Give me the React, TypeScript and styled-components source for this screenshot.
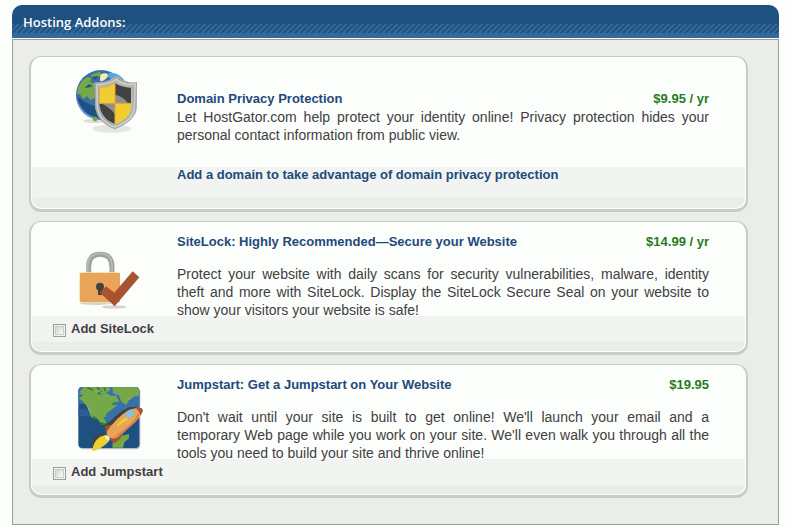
import React from "react";
import styled, { createGlobalStyle } from "styled-components";

const GlobalStyle = createGlobalStyle`
  body {
    margin: 0;
    background: #fcfefb;
    color: #414042;
    font: 14px/18px "Liberation Sans", Arial, sans-serif;
  }
`;

const Panel = styled.section`
  margin: 5px 12px 0;
`;

const PanelHeader = styled.header`
  box-sizing: border-box;
  height: 33px;
  padding: 8px 11px 0;
  border-bottom: 5px solid #36699b;
  border-radius: 10px 10px 0 0;
  background:
    repeating-linear-gradient(135deg, #36699b 0 1px, #1f5180 2px 3px, #36699b 4px) 0 100% / 100% 9px no-repeat,
    #1f5180;
`;

const PanelTitle = styled.h2`
  margin: 0;
  color: #fcfefb;
  font: 600 13px/18px "Open Sans", "Trebuchet MS", sans-serif;
`;

const PanelBody = styled.div`
  display: flex;
  flex-direction: column;
  gap: 9px;
  margin-top: 1px;
  padding: 16px 30px 26px 16px;
  border: 1px solid #9c9e9b;
  background: #ebedea;
`;

const Card = styled.article`
  border: solid #c9cbc8;
  border-width: 1px 2px 3px;
  border-radius: 12px;
  background: #fcfefb;
  overflow: hidden;
`;

const CardMain = styled.div`
  display: grid;
  grid-template-columns: 146px 1fr;
  padding-right: 37px;
`;

const Media = styled.div<{ $top: number }>`
  padding: ${(p) => p.$top}px 0 0 29px;

  svg {
    display: block;
  }
`;

const Details = styled.div<{ $simple?: boolean }>`
  display: flex;
  flex-direction: column;
  gap: ${(p) => (p.$simple ? 0 : 14)}px;
  padding: ${(p) => (p.$simple ? "33px 0 23px" : "11px 0 0")};
`;

const Heading = styled.div`
  display: flex;
  justify-content: space-between;
  font-weight: bold;
`;

const Name = styled.h3`
  margin: 0;
  color: #23497c;
  font-size: 13px;
`;

const Price = styled.span`
  color: #1f7d1c;
  font-size: 13px;
`;

const Description = styled.p`
  margin: 0;
  text-align: justify;
`;

const Strip = styled.div<{ $link?: boolean }>`
  display: flex;
  box-sizing: border-box;
  height: ${(p) => (p.$link ? 31 : 26)}px;
  margin: ${(p) => (p.$link ? "0 1px" : "-3px 1px 0")};
  padding-left: ${(p) => (p.$link ? 145 : 21)}px;
  background: #f2f4f1;
`;

const CardBase = styled.div<{ $tall?: boolean }>`
  height: ${(p) => (p.$tall ? 10 : 9)}px;
  margin: 0 1px 1px;
  border-radius: 0 0 10px 10px;
  background: #ebedea;
`;

const DomainLink = styled.a`
  color: #23497c;
  font-size: 13px;
  font-weight: bold;
  line-height: 16px;
  text-decoration: none;
`;

const Choice = styled.label`
  display: flex;
  gap: 5px;
  padding-top: 4px;
  font-size: 13px;
  font-weight: bold;
`;

const Checkbox = styled.input`
  appearance: none;
  box-sizing: border-box;
  width: 13px;
  height: 13px;
  margin: 4px 0 0;
  border: 1px solid #9c9e9b;
  background: linear-gradient(135deg, #c4c6c3, #f8faf7 75%);
  box-shadow: inset 0 0 0 1px #f2f4f1, inset 0 0 0 2px #c9cbc8;
`;

const PrivacyIcon = () => (
  <svg width="100" height="80" viewBox="0 0 300 240" aria-hidden="true">
    <ellipse cx="155" cy="206" rx="58" ry="12" fill="#e4e6e4" />
    <ellipse cx="102" cy="183" rx="32" ry="6" fill="#dcdedc" />
    <circle cx="123" cy="105" r="75" fill="#3970a8" />
    <path d="M49 112C58 148 88 154 118 179L105 178C73 170 53 143 49 112Z" fill="#5b9fd4" />
    <path d="M52 110C67 120 88 137 116 140V174C79 168 58 145 52 110Z" fill="#1f5180" />
    <path d="M66 62L82 51L94 53L91 67L103 70L104 114L92 121L81 108L70 118L60 103L51 102L54 83Z" fill="#75a846" />
    <path d="M92 45L118 35L126 43L112 52L95 52ZM98 170L110 170V185L99 182Z" fill="#75a846" />
    <path d="M73 83L87 72L98 79L84 83ZM96 51L111 47L114 53L103 61Z" fill="#23568a" />
    <path d="M121 45C132 35 147 40 144 48C139 58 125 67 120 62Z" fill="#eff0b5" />
    <path d="M146 40C165 34 184 47 194 63L165 61L145 52Z" fill="#59a6e1" />
    <path d="M103 68Q139 68 159 54L174 49L190 61Q210 71 231 67V145Q226 184 164 208Q113 186 106 144Z" fill="#b7b9b6" />
    <path d="M103 68Q140 70 166 54L176 50L190 61Q210 71 231 67L228 148Q222 184 164 208L163 196Q216 175 219 142V76Q187 73 169 62Q141 79 117 78L120 143Q124 179 164 195V207Q112 187 106 144Z" fill="#a4a6a3" />
    <path d="M111 74Q146 74 169 58Q192 76 225 72L223 143Q220 181 164 201Q117 182 112 141Z" fill="none" stroke="#d0d2cf" strokeWidth="5" />
    <path d="M119 83Q143 83 165 69V130H118Z" fill="#efce31" />
    <path d="M165 69Q184 82 213 83V130H165Z" fill="#40433f" />
    <path d="M118 130H165V192Q122 177 118 130Z" fill="#40433f" />
    <path d="M165 130H213Q216 178 165 192Z" fill="#efce31" />
    <path d="M165 104Q188 107 204 130H165ZM118 130Q139 133 165 162V130Z" fill="#8e908d" />
    <path d="M165 70V192M118 130H214" stroke="#f2a03c" strokeWidth="3" />
    <path d="M118 130V83Q143 83 165 69" fill="none" stroke="#e9a45a" strokeWidth="3" />
  </svg>
);

const LockIcon = () => (
  <svg width="100" height="72" viewBox="0 0 300 216" aria-hidden="true">
    <ellipse cx="107" cy="190" rx="47" ry="5" fill="#d2d4d1" />
    <ellipse cx="163" cy="201" rx="37" ry="5" fill="#d2d4d1" />
    <path d="M86 98V81Q86 43 120 43Q156 43 156 81V98" fill="none" stroke="#a0a29f" strokeWidth="15" />
    <path d="M83 97V79Q84 40 120 40Q155 40 156 79V97" fill="none" stroke="#b8bab7" strokeWidth="5" />
    <rect x="58" y="97" width="122" height="91" rx="5" fill="#efe29a" />
    <rect x="60" y="99" width="120" height="87" rx="4" fill="#e9a45a" />
    <circle cx="120" cy="140" r="12" fill="#40433f" />
    <path d="M114 147H126V165H114Z" fill="#40433f" />
    <path d="M120 158L138 139L163 158L218 94L238 112L164 199Z" fill="#a7532f" />
  </svg>
);

const JumpstartIcon = () => (
  <svg width="100" height="80" viewBox="0 0 300 240" aria-hidden="true">
    <rect x="57" y="38" width="184" height="185" rx="13" fill="#b4bcc3" />
    <rect x="55" y="36" width="183" height="183" rx="12" fill="#1f5180" />
    <path d="M55 86H100L116 131L132 146L238 102V48Q238 36 226 36H67Q55 36 55 48Z" fill="#3970a8" />
    <path d="M55 124H94L78 103H55Z" fill="#2b5e93" />
    <path d="M55 72L69 61L60 49L70 37H148L151 45L139 53L154 63L168 62L178 80L158 83L157 91L174 89L154 105L140 114L137 126L130 127L140 143L126 150L113 133L93 127L86 107L80 93L64 74Z" fill="#75a846" />
    <path d="M156 37H226Q237 37 237 48V62L224 64L207 76L198 91L183 78L177 61L160 50ZM158 202L185 182L207 177L207 190L193 202L189 218H157Z" fill="#75a846" />
    <path d="M111 37L123 49L116 55L134 60M132 37L137 48M82 39L99 45M121 143L138 149L143 143M99 124L116 136" fill="none" stroke="#337e31" strokeWidth="5" />
    <path d="M58 57L67 54M104 50L120 46L125 58L139 63M158 51L173 61M205 75L216 66M83 92L92 115" fill="none" stroke="#90a9ab" strokeWidth="3" />
    <path d="M235 95L207 97L187 107L164 126L145 145L132 151L141 162L170 136L205 108ZM90 214L103 186L131 174L140 184L108 205Z" fill="#40433f" />
    <path d="M136 153L163 148L151 177L138 171ZM150 194L189 174L180 192L164 205Z" fill="#a7532f" />
    <path d="M236 98Q250 99 248 108Q246 121 229 138L185 178Q165 195 151 189Q139 184 140 171Q164 132 207 104Z" fill="#e9a45a" />
    <path d="M235 98Q251 98 248 110L240 122Q241 109 228 101Z" fill="#a7532f" />
    <path d="M235 111Q226 145 157 188L180 181L224 143Q242 126 235 111Z" fill="#d98149" />
    <path d="M171 150Q184 134 198 127L205 134Q190 139 171 157Z" fill="#efce31" />
    <path d="M196 122Q201 105 217 104Q227 108 219 120Q212 130 200 129Z" fill="#75c5f0" />
    <path d="M135 180Q151 181 149 195L139 203L128 197Z" fill="#f8edc3" />
    <path d="M97 229Q98 201 120 185L135 181Q134 193 147 198Q129 220 97 229Z" fill="#efce31" />
  </svg>
);

type AddonProps = {
  name: string;
  price: string;
  description: string;
  icon: React.ReactNode;
  iconTop: number;
  choice?: string;
};

const Addon = ({ name, price, description, icon, iconTop, choice }: AddonProps) => (
  <Card>
    <CardMain>
      <Media $top={iconTop}>{icon}</Media>
      <Details $simple={!choice}>
        <Heading>
          <Name>{name}</Name>
          <Price>{price}</Price>
        </Heading>
        <Description>{description}</Description>
      </Details>
    </CardMain>
    <Strip $link={!choice}>
      {choice ? (
        <Choice>
          <Checkbox type="checkbox" />
          {choice}
        </Choice>
      ) : (
        <DomainLink href="#domain">Add a domain to take advantage of domain privacy protection</DomainLink>
      )}
    </Strip>
    <CardBase $tall={!choice} />
  </Card>
);

export default function App() {
  return (
    <>
      <GlobalStyle />
      <Panel>
        <PanelHeader>
          <PanelTitle>Hosting Addons:</PanelTitle>
        </PanelHeader>
        <PanelBody>
          <Addon
            name="Domain Privacy Protection"
            price="$9.95 / yr"
            description="Let HostGator.com help protect your identity online! Privacy protection hides your personal contact information from public view."
            icon={<PrivacyIcon />}
            iconTop={3}
          />
          <Addon
            name="SiteLock: Highly Recommended—Secure your Website"
            price="$14.99 / yr"
            description="Protect your website with daily scans for security vulnerabilities, malware, identity theft and more with SiteLock. Display the SiteLock Secure Seal on your website to show your visitors your website is safe!"
            icon={<LockIcon />}
            iconTop={18}
            choice="Add SiteLock"
          />
          <Addon
            name="Jumpstart: Get a Jumpstart on Your Website"
            price="$19.95"
            description={
              "Don't wait until your site is built to get online! We'll launch your email and a temporary\u00a0Web page while you work on your site. We'll even walk you through all the tools\u00a0you need to build your site and thrive online!"
            }
            icon={<JumpstartIcon />}
            iconTop={10}
            choice="Add Jumpstart"
          />
        </PanelBody>
      </Panel>
    </>
  );
}
